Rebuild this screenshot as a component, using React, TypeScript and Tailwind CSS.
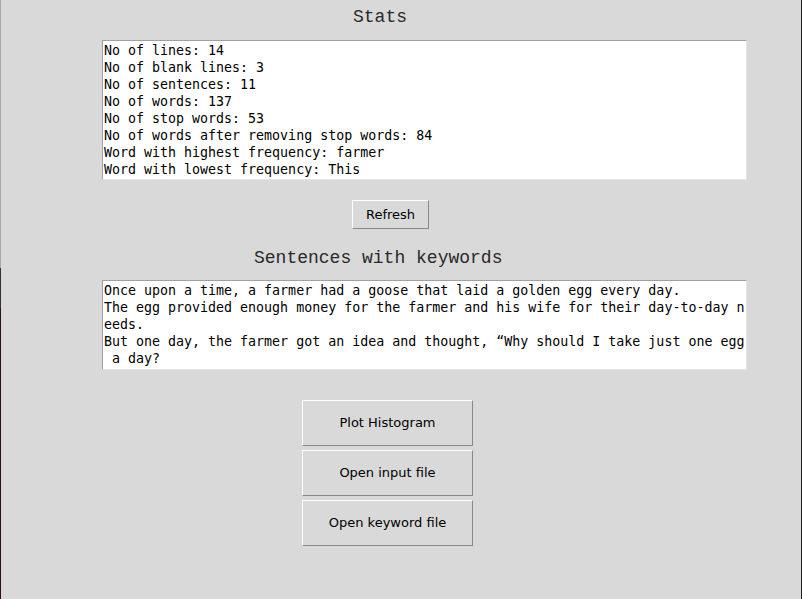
const stats = [
  "No of lines: 14",
  "No of blank lines: 3",
  "No of sentences: 11",
  "No of words: 137",
  "No of stop words: 53",
  "No of words after removing stop words: 84",
  "Word with highest frequency: farmer",
  "Word with lowest frequency: This",
];

// Tk text widget wraps by char, so lines are kept as drawn
const sentences = [
  "Once upon a time, a farmer had a goose that laid a golden egg every day.",
  "The egg provided enough money for the farmer and his wife for their day-to-day n",
  "eeds.",
  "But one day, the farmer got an idea and thought, \u201cWhy should I take just one egg",
  " a day?",
];

const mono = "font-['DejaVu_Sans_Mono',monospace] text-[13.3px] leading-[17px] text-black";
const title = "font-['Liberation_Mono',monospace] text-[18px] leading-[20px] text-[#2a2a2a]";
const btn =
  "font-['DejaVu_Sans',sans-serif] text-[13px] text-black bg-[#d9d9d9] border border-t-white border-l-white border-b-[#888] border-r-[#888] flex items-center justify-center";

const TextBox = ({ lines, h }: { lines: string[]; h: string }) => (
  <div
    className={`ml-[101px] w-[645px] ${h} bg-white border border-t-[#a0a0a0] border-l-[#a0a0a0] border-b-[#e4e4e4] border-r-[#e4e4e4] pl-[1px] pt-[1px] overflow-hidden`}
  >
    {lines.map((l, i) => (
      <div key={i} className={`${mono} whitespace-pre`}>
        {l}
      </div>
    ))}
  </div>
);

export default function App() {
  return (
    <div className="w-[802px] h-[599px] flex bg-[#d9d9d9] overflow-hidden">
      <div className="w-px h-full flex flex-col">
        <div className="h-[268px] bg-[#a8a8a8]" />
        <div className="h-[40px] bg-[#333]" />
        <div className="flex-1 bg-[#2a0e24]" />
      </div>
      <div className="w-[799px] h-full flex flex-col">
        <div className={`${title} mt-[7px] ml-[352px]`}>Stats</div>
        <div className="mt-[13px]">
          <TextBox lines={stats} h="h-[140px]" />
        </div>
        <button className={`${btn} mt-[20px] ml-[351px] w-[77px] h-[29px]`}>Refresh</button>
        <div className={`${title} mt-[19px] ml-[253px]`}>Sentences with keywords</div>
        <div className="mt-[12px]">
          <TextBox lines={sentences} h="h-[90px]" />
        </div>
        <div className="mt-[30px] ml-[301px] flex flex-col gap-[4px]">
          <button className={`${btn} w-[171px] h-[46px]`}>Plot Histogram</button>
          <button className={`${btn} w-[171px] h-[46px]`}>Open input file</button>
          <button className={`${btn} w-[171px] h-[46px]`}>Open keyword file</button>
        </div>
      </div>
      <div className="w-px h-full bg-[#d9d9d9]" />
      <div className="w-px h-full bg-[#1e1e1e]" />
    </div>
  );
}
